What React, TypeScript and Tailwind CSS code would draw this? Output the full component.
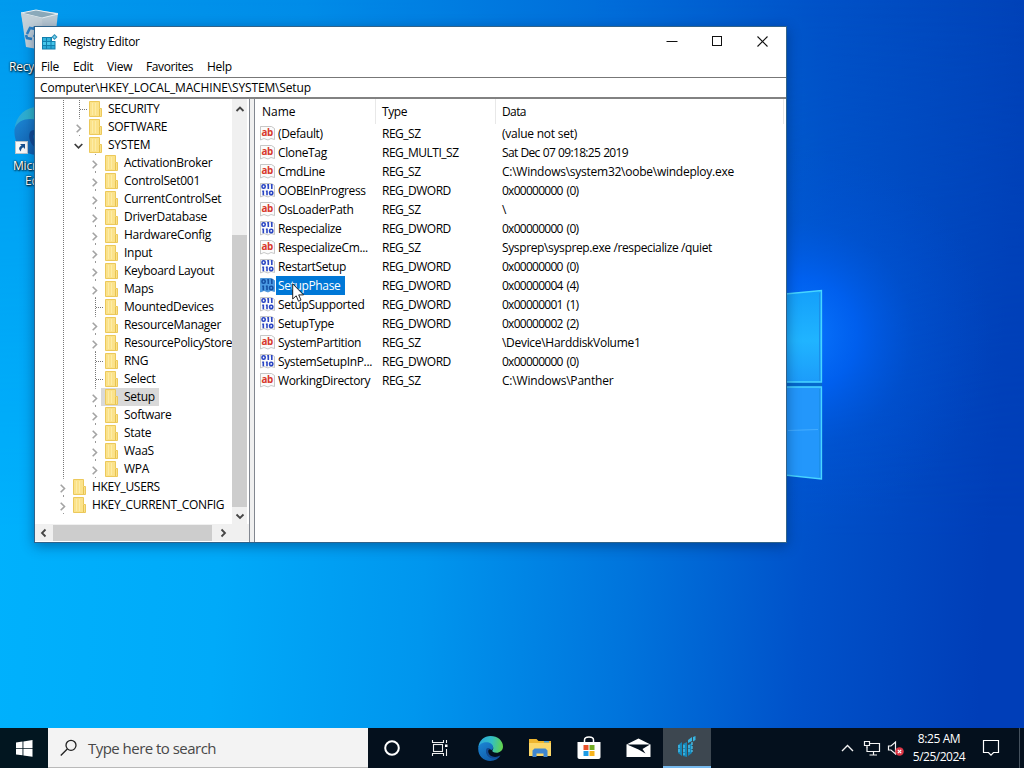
import React from "react";

type NodeKind = "closed" | "open" | "leaf";
type TreeNode = { name: string; level: 0 | 1 | 2; kind: NodeKind };

const tree: TreeNode[] = [
  { name: "SECURITY", level: 1, kind: "leaf" },
  { name: "SOFTWARE", level: 1, kind: "closed" },
  { name: "SYSTEM", level: 1, kind: "open" },
  { name: "ActivationBroker", level: 2, kind: "closed" },
  { name: "ControlSet001", level: 2, kind: "closed" },
  { name: "CurrentControlSet", level: 2, kind: "closed" },
  { name: "DriverDatabase", level: 2, kind: "closed" },
  { name: "HardwareConfig", level: 2, kind: "closed" },
  { name: "Input", level: 2, kind: "closed" },
  { name: "Keyboard Layout", level: 2, kind: "closed" },
  { name: "Maps", level: 2, kind: "closed" },
  { name: "MountedDevices", level: 2, kind: "leaf" },
  { name: "ResourceManager", level: 2, kind: "closed" },
  { name: "ResourcePolicyStore", level: 2, kind: "closed" },
  { name: "RNG", level: 2, kind: "leaf" },
  { name: "Select", level: 2, kind: "leaf" },
  { name: "Setup", level: 2, kind: "closed" },
  { name: "Software", level: 2, kind: "closed" },
  { name: "State", level: 2, kind: "closed" },
  { name: "WaaS", level: 2, kind: "closed" },
  { name: "WPA", level: 2, kind: "closed" },
  { name: "HKEY_USERS", level: 0, kind: "closed" },
  { name: "HKEY_CURRENT_CONFIG", level: 0, kind: "closed" },
];

const HEX = "tracking-[-0.74px] [word-spacing:1.6px]";

const values: [string, string, string, string][] = [
  ["(Default)", "REG_SZ", "(value not set)", "tracking-[-0.25px]"],
  ["CloneTag", "REG_MULTI_SZ", "Sat Dec 07 09:18:25 2019", "tracking-[-0.68px] [word-spacing:0.6px]"],
  ["CmdLine", "REG_SZ", "C:\\Windows\\system32\\oobe\\windeploy.exe", "tracking-[-0.25px]"],
  ["OOBEInProgress", "REG_DWORD", "0x00000000 (0)", HEX],
  ["OsLoaderPath", "REG_SZ", "\\", HEX],
  ["Respecialize", "REG_DWORD", "0x00000000 (0)", HEX],
  ["RespecializeCm...", "REG_SZ", "Sysprep\\sysprep.exe /respecialize /quiet", "tracking-[-0.37px]"],
  ["RestartSetup", "REG_DWORD", "0x00000000 (0)", HEX],
  ["SetupPhase", "REG_DWORD", "0x00000004 (4)", HEX],
  ["SetupSupported", "REG_DWORD", "0x00000001 (1)", HEX],
  ["SetupType", "REG_DWORD", "0x00000002 (2)", HEX],
  ["SystemPartition", "REG_SZ", "\\Device\\HarddiskVolume1", "tracking-[-0.3px]"],
  ["SystemSetupInP...", "REG_DWORD", "0x00000000 (0)", HEX],
  ["WorkingDirectory", "REG_SZ", "C:\\Windows\\Panther", "tracking-[-0.2px]"],
];

function Wallpaper() {
  return (
    <svg className="absolute inset-0" width="1024" height="768" viewBox="0 0 1024 768">
      <defs>
        <linearGradient id="sky" x1="0" y1="0.05" x2="1" y2="0">
          <stop offset="0" stopColor="#009bee" />
          <stop offset="0.3" stopColor="#008ce8" />
          <stop offset="0.6" stopColor="#006cd9" />
          <stop offset="0.8" stopColor="#0052c8" />
          <stop offset="1" stopColor="#0042b8" />
        </linearGradient>
        <linearGradient id="floor" x1="0" y1="0" x2="1" y2="0.05">
          <stop offset="0" stopColor="#00b2fd" />
          <stop offset="0.25" stopColor="#00aaf9" />
          <stop offset="0.45" stopColor="#0096ee" />
          <stop offset="0.65" stopColor="#0074dc" />
          <stop offset="0.82" stopColor="#0052ca" />
          <stop offset="1" stopColor="#003eb8" />
        </linearGradient>
        <linearGradient id="fade" x1="0" y1="0" x2="0" y2="1">
          <stop offset="0" stopColor="#000" />
          <stop offset="0.7" stopColor="#fff" />
        </linearGradient>
        <mask id="lower">
          <rect width="1024" height="768" fill="url(#fade)" />
        </mask>
        <radialGradient id="glow" gradientUnits="userSpaceOnUse" cx="800" cy="335" r="190">
          <stop offset="0" stopColor="#0a78ff" />
          <stop offset="0.3" stopColor="#0064fa" stopOpacity="0.75" />
          <stop offset="0.6" stopColor="#0058e0" stopOpacity="0.3" />
          <stop offset="1" stopColor="#0050d8" stopOpacity="0" />
        </radialGradient>
        <linearGradient id="paneTop" x1="0" y1="0" x2="0" y2="1">
          <stop offset="0" stopColor="#14a0fa" />
          <stop offset="0.55" stopColor="#20b4ff" />
          <stop offset="1" stopColor="#1c9cfa" />
        </linearGradient>
      </defs>
      <rect width="1024" height="768" fill="url(#sky)" />
      <rect width="1024" height="768" fill="url(#floor)" mask="url(#lower)" />
      <rect x="600" y="130" width="400" height="420" fill="url(#glow)" />
      <path d="M780 294 L822 290.5 V382 H780Z" fill="url(#paneTop)" />
      <path d="M780 387 H822 V479 L780 474Z" fill="#2397fb" />
      <path d="M780 382.5H822V386.5H780Z" fill="#0568cc" />
      <path d="M780 294.5 L821.5 290.5 V382 H780 M780 387H821.500V479 L780 474.500" fill="none" stroke="#48d6ff" strokeWidth="1.3" />
      <path d="M819.500 293V381 M819.500 389V477" stroke="#1c8fe8" strokeWidth="1" />
      <path d="M788 430.500 L818 429.500" stroke="#4cb2ff" strokeWidth="0.8" />
    </svg>
  );
}

function RecycleBin() {
  return (
    <svg width="38" height="44" viewBox="0 0 38 44">
      <path d="M1 4 L16 1 L38 4 L34 40 L8 38Z" fill="#b9c9d3" />
      <path d="M1 4 L16 1 L38 5 L22 9Z" fill="#8ba9ba" stroke="#e7eff3" strokeWidth="1" />
      <path d="M1 4 L22 9 L23 41 L6 38Z" fill="#c3d0d8" />
      <path d="M7 25l3-6 5 1M13 18l4 5-3 5M12 30l-5-1-1-3" fill="none" stroke="#2a82c8" strokeWidth="2.600" />
    </svg>
  );
}

function EdgeLogo({ size, id }: { size: number; id: string }) {
  return (
    <svg width={size} height={size} viewBox="0 0 24 24">
      <defs>
        <linearGradient id={id + "a"} x1="0" y1="0.2" x2="1" y2="0.3">
          <stop offset="0" stopColor="#2ba5dc" />
          <stop offset="0.55" stopColor="#33bfc4" />
          <stop offset="1" stopColor="#62d34f" />
        </linearGradient>
        <linearGradient id={id + "b"} x1="0" y1="0" x2="0.7" y2="1">
          <stop offset="0" stopColor="#1c86d4" />
          <stop offset="1" stopColor="#0f5aa8" />
        </linearGradient>
      </defs>
      <path d="M0.300 11C1 4 6 0 12 0c7 0 12 4.600 12 10 0 3.800-3 6-6.200 6-2.800 0-4.500-1-4-2 1.700-1.900 1-5-2.800-5.500C6 7.500 1.500 9 0.300 11Z" fill={`url(#${id}a)`} />
      <path d="M0.300 11c1-3.600 4.500-5 7.700-5 4.500 0 6.500 2.600 6.500 5 0 1-.400 2-1 2.700-1.200-1.300-3.800-1.400-4.700.3-1.400 3 1.600 7.500 6.700 7 2.600-.200 4.800-1.300 6-2.200C19.500 22 16 24 12 24 4.500 24-.500 18 .300 11Z" fill={`url(#${id}b)`} />
      <path d="M8 12.500c-1.500 3.800 1.500 9.500 8 9.200 2-.200 4-1.200 5.500-2.900-5 2.500-10.700 1.200-11.600-3.200-.3-1.500.4-3 1.600-3.800-1.300-.6-2.900-.3-3.500.7Z" fill="#124a93" />
    </svg>
  );
}

function RegistryIcon() {
  return (
    <svg width="17" height="17" viewBox="0 0 17 17">
      <path d="M1 3H11V7H14.500V15.500H1Z" fill="#127fae" />
      <path d="M2 4h3v3H2zM6 4h3.500v3H6z" fill="#35b4dc" />
      <path d="M2 8h3v3H2zM6 8h3.500v3H6zM10.500 8h3v3h-3z" fill="#46c6ea" />
      <path d="M2 12h3v2.500H2zM6 12h3.500v2.500H6zM10.500 12h3v2.500h-3z" fill="#2ba9d6" />
      <path d="M13.500 0L16.500 3 13.500 6 10.500 3Z" fill="#2c8fb8" />
      <path d="M13.500 1.500L15 3 13.500 4.500 12 3Z" fill="#7bd5ee" />
    </svg>
  );
}

function Guide({ type }: { type: "line" | "leaf" | "closed" | "open" | "blank" }) {
  return (
    <svg className="shrink-0" width="16" height="18" viewBox="0 0 16 18">
      {(type === "line" || type === "leaf") && (
        <path d="M8.500 0V18" stroke="#777" strokeWidth="1" strokeDasharray="1 1" />
      )}
      {type === "leaf" && <path d="M9 9.500H16" stroke="#777" strokeWidth="1" strokeDasharray="1 1" />}
      {type === "closed" && (
        <>
          <path d="M8 0.500H9M8 17.500H9" stroke="#999" />
          <path d="M5.700 6.700L9.500 10.500 5.700 14.300" fill="none" stroke="#a3a3a3" strokeWidth="1.6" />
        </>
      )}
      {type === "open" && <path d="M3.700 8L7.500 11.800 11.300 8" fill="none" stroke="#3c3c3c" strokeWidth="1.7" />}
    </svg>
  );
}

function Folder() {
  return (
    <svg className="ml-[2px] shrink-0" width="13" height="16" viewBox="0 0 13 16">
      <path d="M0.500 0.500H10.500V7.500H12.500V15.500H0.500Z" fill="#fbe28a" stroke="#ecc95b" />
      <path d="M10.500 8V15" stroke="#e8c350" />
      <path d="M3.500 2V14M6.500 2V14" stroke="#fdeca6" strokeWidth="1" />
    </svg>
  );
}

function TreeRow({ node }: { node: TreeNode }) {
  const selected = node.name === "Setup";
  return (
    <div className="flex h-[18px] items-center pl-[20px]">
      {node.level > 0 && <Guide type="line" />}
      {node.level > 1 && <Guide type="blank" />}
      <Guide type={node.kind} />
      <div className={selected ? "-ml-[2px] flex h-[18px] items-center bg-[#d9d9d9] pl-[2px] pr-[4px]" : "flex h-[18px] items-center"}>
        <Folder />
        <span className="ml-[6px] whitespace-pre">{node.name}</span>
      </div>
    </div>
  );
}

function ValueIcon({ text, selected }: { text: boolean; selected: boolean }) {
  return (
    <svg className="-mt-[1px] shrink-0" width="16" height="16" viewBox="0 0 16 16">
      <path
        d="M0.500 1.500H11.500L14.500 3.500V14.500L11 13.500 8 15 4 13.500 0.500 15Z"
        fill={selected ? "#4b9ae3" : "#fbfbfb"}
        stroke={selected ? "#3c8bd6" : "#b9b9b9"}
        strokeWidth="0.8"
      />
      {text ? (
        <text x="1.500" y="10.500" textLength="11.500" lengthAdjust="spacingAndGlyphs" fill="#d8382a" className="font-['Open_Sans',sans-serif] text-[10.5px] font-bold">
          ab
        </text>
      ) : (
        <g fill="none" stroke={selected ? "#1450a4" : "#2b46c4"} strokeWidth="1.6">
          <rect x="2" y="2.800" width="3.200" height="3.400" rx="1.400" />
          <path d="M8.300 2V7M11.800 2V7M7.200 2.800H8.300M10.800 2.800H11.800M3.300 8.500V13.300M7 8.500V13.300M2.200 9.200H3.300M5.900 9.200H7" />
          <rect x="9.600" y="9.200" width="3.200" height="3.400" rx="1.400" />
        </g>
      )}
    </svg>
  );
}

function Arrow({ d, className }: { d: string; className: string }) {
  return (
    <div className={"flex shrink-0 items-center justify-center " + className}>
      <svg width="10" height="10" viewBox="0 0 10 10">
        <path d={d} fill="none" stroke="#454545" strokeWidth="1.8" />
      </svg>
    </div>
  );
}

function TreePane() {
  return (
    <div className="flex w-[214px] shrink-0 flex-col">
      <div className="flex h-[425px]">
        <div className="w-[197px] overflow-hidden pt-[1px] tracking-[-0.29px]">
          {tree.map((n) => (
            <TreeRow key={n.name} node={n} />
          ))}
        </div>
        <div className="flex w-[15px] flex-col bg-[#f0f0f0]">
          <Arrow className="h-[20px]" d="M1.500 7L5 3.500 8.500 7" />
          <div className="h-[116px]" />
          <div className="h-[272px] bg-[#cdcdcd]" />
          <Arrow className="h-[17px]" d="M1.500 3.500L5 7 8.500 3.500" />
        </div>
      </div>
      <div className="flex h-[17px] items-center bg-[#f0f0f0]">
        <Arrow className="w-[18px]" d="M6.500 1.500L3 5 6.500 8.500" />
        <div className="h-[16px] w-[159px] bg-[#cdcdcd]" />
        <Arrow className="w-[21px]" d="M3.500 1.500L7 5 3.500 8.500" />
      </div>
    </div>
  );
}

function ListPane() {
  return (
    <div className="flex-1">
      <div className="flex h-[25px] items-center">
        <div className="h-[25px] w-[121px] border-r border-[#e8e8e8] pl-[7px] leading-[26px]">Name</div>
        <div className="h-[25px] w-[120px] border-r border-[#e8e8e8] pl-[6px] leading-[26px] tracking-[-0.4px]">Type</div>
        <div className="h-[25px] w-[288px] border-r border-[#e8e8e8] pl-[6px] leading-[26px] tracking-[-0.6px]">Data</div>
      </div>
      {values.map(([name, type, data, tracking]) => {
        const sel = name === "SetupPhase";
        return (
          <div key={name} className="flex h-[19px] items-center">
            <div className="flex w-[127px] items-center whitespace-pre pl-[5px] tracking-[-0.36px]">
              <ValueIcon text={type !== "REG_DWORD"} selected={sel} />
              <span className={sel ? "flex h-[19px] w-[69px] items-center bg-[#0078d7] pl-[2px] text-white" : "pl-[2px]"}>{name}</span>
            </div>
            <div className="w-[120px] tracking-[-0.5px]">{type}</div>
            <div className={"whitespace-pre " + tracking}>{data}</div>
          </div>
        );
      })}
    </div>
  );
}

function RegistryWindow() {
  return (
    <div className="absolute left-[34px] top-[26px] flex h-[517px] w-[753px] flex-col border border-[#31638a] bg-white text-[12px] leading-[16px] text-black shadow-[0_3px_12px_rgba(0,30,80,0.45)]">
      <div className="flex h-[30px] shrink-0 items-center pl-[6px]">
        <RegistryIcon />
        <span className="ml-[5px] flex-1 tracking-[-0.3px]">Registry Editor</span>
        <svg width="138" height="30" viewBox="0 0 138 30" fill="none" stroke="#111">
          <path d="M18.500 14.500H29.500" />
          <rect x="64.500" y="9.500" width="9" height="9" />
          <path d="M109.500 9.500L119.500 19.500M119.500 9.500L109.500 19.500" strokeWidth="1.1" />
        </svg>
      </div>
      <div className="flex h-[20px] shrink-0 items-center tracking-[-0.25px]">
        <span className="w-[38px] pl-[6px]">File</span>
        <span className="w-[34px]">Edit</span>
        <span className="w-[39px]">View</span>
        <span className="w-[61px] tracking-[-0.4px]">Favorites</span>
        <span>Help</span>
      </div>
      <div className="flex h-[22px] shrink-0 items-center border-b-2 border-t border-b-[#828282] border-t-[#777] pl-[5px] tracking-[-0.15px]">
        Computer\HKEY_LOCAL_MACHINE\SYSTEM\Setup
      </div>
      <div className="flex h-[443px]">
        <TreePane />
        <div className="w-[6px] shrink-0 border-x border-[#828790] bg-[#f0f0f0]" />
        <ListPane />
      </div>
    </div>
  );
}

function Taskbar() {
  return (
    <div className="absolute bottom-0 left-0 flex h-[40px] w-full items-center bg-[#04101d]">
      <div className="flex h-full w-[48px] items-center justify-center bg-[#021620]">
        <svg width="17" height="17" viewBox="0 0 17 17" fill="#fff">
          <path d="M0 2.400L6.500 1.500V7.900H0ZM7.400 1.400L16.500 0V7.900H7.400ZM0 8.800H6.500V15.300L0 14.400ZM7.400 8.800H16.500V16.700L7.400 15.400Z" />
        </svg>
      </div>
      <div className="flex h-full w-[320px] items-center border-b border-[#b9b9b9] bg-[#f3f3f3] pl-[12px]">
        <svg width="18" height="18" viewBox="0 0 18 18" fill="none" stroke="#222" strokeWidth="1.3">
          <circle cx="11" cy="6.300" r="5" />
          <path d="M7.300 10L0.800 16.500" />
        </svg>
        <span className="ml-[10px] mt-[2px] text-[15px] tracking-[-0.53px] text-[#484848]">Type here to search</span>
      </div>
      <div className="flex w-[48px] justify-center">
        <svg width="18" height="18" viewBox="0 0 18 18">
          <circle cx="9" cy="9" r="6.800" fill="none" stroke="#fff" strokeWidth="2" />
        </svg>
      </div>
      <div className="flex w-[47px] justify-center">
        <svg width="17" height="16" viewBox="0 0 17 16" fill="none" stroke="#eee" strokeWidth="1.100">
          <rect x="2.500" y="4.500" width="9" height="7" />
          <path d="M1.500 0V2.500H12.500V0M1.500 16V13.500H12.500V16M15.500 0V3M15.500 9V16" />
          <rect x="14" y="4.500" width="2.500" height="2.500" fill="#fff" stroke="none" />
        </svg>
      </div>
      <div className="flex w-[54px] justify-center">
        <EdgeLogo size={25} id="bar" />
      </div>
      <div className="flex w-[46px] justify-center">
        <svg width="22" height="20" viewBox="0 0 22 20">
          <path d="M0 1H7.500L9.500 3H22V18H0Z" fill="#eeb52f" />
          <path d="M0 5H22V18H0Z" fill="#fcd769" />
          <path d="M3.500 19V12.500L5.500 10.500H16.500L18.500 12.500V19H14.500V15.500H7.500V19Z" fill="#3f86d0" />
          <path d="M15 3H20V4.500H15Z" fill="#4fa3d9" />
        </svg>
      </div>
      <div className="flex w-[51px] justify-center">
        <svg width="24" height="24" viewBox="0 0 24 24">
          <path d="M7.500 7V4C7.500 1.500 9.500 1 12 1S16.500 1.500 16.500 4V7" fill="none" stroke="#fff" strokeWidth="1.500" />
          <path d="M0.500 6H23.500V21C23.500 22.300 22.700 23 21.500 23H2.500C1.300 23 0.500 22.300 0.500 21Z" fill="#fff" />
          <path d="M6.500 9H11.500V14H6.500Z" fill="#e8512a" />
          <path d="M12.500 9H17.500V14H12.500Z" fill="#74ad24" />
          <path d="M6.500 15H11.500V20H6.500Z" fill="#1e9ce6" />
          <path d="M12.500 15H17.500V20H12.500Z" fill="#f8b41d" />
        </svg>
      </div>
      <div className="flex w-[49px] justify-center">
        <svg width="25" height="20" viewBox="0 0 25 20">
          <path d="M0.500 6.500L12.500 0.500 24.500 6.500V19H0.500Z" fill="#fff" />
          <path d="M1 6.500H24L16.500 11 19.500 15.500 12.500 11.500Z" fill="#04101d" />
        </svg>
      </div>
      <div className="flex h-full w-[48px] items-center justify-center border-b-2 border-[#76b9ed] bg-[#3d4750]">
        <svg width="20" height="22" viewBox="0 0 20 22">
          <path d="M1 9L5 6V20L1 17ZM6 8L10 6V21L6 20ZM11 9L15 7V17L11 20Z" fill="#1687b8" />
          <path d="M2 9V16M7 9V19M12 9V17M15 6V16" stroke="#52c7ef" strokeWidth="1.200" strokeDasharray="3 1" />
          <path d="M11 4L15 1V5L11 7ZM16 1L18.500 0V4L16 5.500Z" fill="#38b5e2" />
        </svg>
      </div>
      <div className="flex-1" />
      <svg width="64" height="20" viewBox="0 0 64 20" fill="none" stroke="#f4f4f4" strokeWidth="1.200">
        <path d="M1 13L6.500 7.500 12 13" strokeWidth="1.400" />
        <path d="M29 5.500H38.500V13.500H26V9.500M32.500 13.500V17M28.500 17H36" />
        <path d="M23.500 3.500H28.500V7.500H23.500ZM26 7.500V10" />
        <path d="M47.500 8H50L54.500 4V16L50 12H47.500Z" />
        <circle cx="58.500" cy="13.500" r="4.300" fill="#dc3545" stroke="none" />
        <path d="M56.800 11.800L60.200 15.200M60.200 11.800L56.800 15.200" stroke="#fff" />
      </svg>
      <div className="flex w-[68px] flex-col items-center text-[12px] leading-[18px] text-white">
        <span className="tracking-[-0.4px]">8:25 AM</span>
        <span className="tracking-[-0.5px]">5/25/2024</span>
      </div>
      <svg className="ml-[9px]" width="18" height="18" viewBox="0 0 18 18" fill="none" stroke="#fff" strokeWidth="1.200">
        <path d="M1.500 1.500H16.500V13.500H11.500L9 16.200 6.500 13.500H1.500Z" />
      </svg>
      <div className="ml-[19px] mr-[4px] h-full w-px bg-[#45515d]" />
    </div>
  );
}

export default function App() {
  return (
    <div className="relative h-[768px] w-[1024px] overflow-hidden bg-[#0078d7] font-['Open_Sans','Noto_Sans',sans-serif]">
      <Wallpaper />
      <div className="absolute left-0 top-[9px] w-[80px] text-[12px] leading-[15px] text-white [text-shadow:1px_1px_2px_#000,0_0_2px_#000]">
        <div className="flex h-[50px] pl-[20px]">
          <RecycleBin />
        </div>
        <div className="whitespace-nowrap pl-[9px] tracking-[-0.2px]">Recycle Bin</div>
      </div>
      <div className="absolute left-0 top-[107px] w-[76px] text-[12px] leading-[15px] text-white [text-shadow:1px_1px_2px_#000,0_0_2px_#000]">
        <div className="flex h-[51px] items-start pl-[14px]">
          <EdgeLogo size={48} id="desk" />
        </div>
        <div className="whitespace-nowrap pl-[13px] tracking-[-0.2px]">Microsoft</div>
        <div className="pl-[25px] tracking-[-0.2px]">Edge</div>
        <svg className="absolute left-[15px] top-[34px]" width="13" height="13" viewBox="0 0 13 13">
          <rect x="0.500" y="0.500" width="12" height="12" fill="#f8f8f8" stroke="#b8c4cc" />
          <path d="M5 3H10V8L8.300 6.300C6.500 7.300 6 8.500 6 10.500 3 8.500 4 5.800 6.600 4.600Z" fill="#17508f" />
        </svg>
      </div>
      <RegistryWindow />
      <Taskbar />
      <svg className="absolute left-[292px] top-[283px]" width="13" height="20" viewBox="0 0 13 20">
        <path d="M0.700 0.800V16L4.200 12.800 6.500 18.200 9 17.100 6.700 11.900H11.500Z" fill="#fff" stroke="#111" strokeWidth="0.900" />
      </svg>
    </div>
  );
}
